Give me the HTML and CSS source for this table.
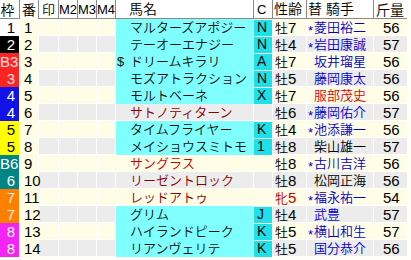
FILE: index.html
```html
<!DOCTYPE html>
<html lang="ja">
<head>
<meta charset="utf-8">
<link rel="stylesheet" href="styles.css">
</head>
<body>
<div class="table">
  <div class="row head">
    <div class="c waku">枠</div>
    <div class="c ban">番</div>
    <div class="c m">印</div>
    <div class="c m">M2</div>
    <div class="c m">M3</div>
    <div class="c m">M4</div>
    <div class="c name">馬名</div>
    <div class="c cc">C</div>
    <div class="c sex">性齢</div>
    <div class="c jk">替 騎手</div>
    <div class="c kin">斤量</div>
  </div>

  <div class="row odd">
    <div class="c waku w1">1</div><div class="c ban">1</div>
    <div class="c m"></div><div class="c m"></div><div class="c m"></div><div class="c m"></div>
    <div class="c name cy"><span class="mk"></span>マルターズアポジー</div>
    <div class="c cc"><span class="cbox">N</span></div>
    <div class="c sex">牡<span class="num">7</span></div>
    <div class="c jk blue"><span class="ast">*</span>菱田裕二</div>
    <div class="c kin">56</div>
  </div>
  <div class="row even">
    <div class="c waku w2">2</div><div class="c ban">2</div>
    <div class="c m"></div><div class="c m"></div><div class="c m"></div><div class="c m"></div>
    <div class="c name cy"><span class="mk"></span>テーオーエナジー</div>
    <div class="c cc"><span class="cbox">N</span></div>
    <div class="c sex">牡<span class="num">4</span></div>
    <div class="c jk blue"><span class="ast">*</span>岩田康誠</div>
    <div class="c kin">57</div>
  </div>
  <div class="row odd">
    <div class="c waku w3">B3</div><div class="c ban">3</div>
    <div class="c m"></div><div class="c m"></div><div class="c m"></div><div class="c m"></div>
    <div class="c name cy"><span class="mk">$</span>ドリームキラリ</div>
    <div class="c cc"><span class="cbox">A</span></div>
    <div class="c sex">牡<span class="num">7</span></div>
    <div class="c jk blue"><span class="ast"></span>坂井瑠星</div>
    <div class="c kin">56</div>
  </div>
  <div class="row even">
    <div class="c waku w3">3</div><div class="c ban">4</div>
    <div class="c m"></div><div class="c m"></div><div class="c m"></div><div class="c m"></div>
    <div class="c name cy"><span class="mk"></span>モズアトラクション</div>
    <div class="c cc"><span class="cbox">N</span></div>
    <div class="c sex">牡<span class="num">5</span></div>
    <div class="c jk blue"><span class="ast"></span>藤岡康太</div>
    <div class="c kin">56</div>
  </div>
  <div class="row odd">
    <div class="c waku w4">4</div><div class="c ban">5</div>
    <div class="c m"></div><div class="c m"></div><div class="c m"></div><div class="c m"></div>
    <div class="c name cy"><span class="mk"></span>モルトベーネ</div>
    <div class="c cc"><span class="cbox">X</span></div>
    <div class="c sex">牡<span class="num">7</span></div>
    <div class="c jk red"><span class="ast"></span>服部茂史</div>
    <div class="c kin">56</div>
  </div>
  <div class="row even">
    <div class="c waku w4">4</div><div class="c ban">6</div>
    <div class="c m"></div><div class="c m"></div><div class="c m"></div><div class="c m"></div>
    <div class="c name dred"><span class="mk"></span>サトノティターン</div>
    <div class="c cc"></div>
    <div class="c sex">牡<span class="num">6</span></div>
    <div class="c jk blue"><span class="ast">*</span>藤岡佑介</div>
    <div class="c kin">57</div>
  </div>
  <div class="row odd">
    <div class="c waku w5">5</div><div class="c ban">7</div>
    <div class="c m"></div><div class="c m"></div><div class="c m"></div><div class="c m"></div>
    <div class="c name cy"><span class="mk"></span>タイムフライヤー</div>
    <div class="c cc"><span class="cbox">K</span></div>
    <div class="c sex">牡<span class="num">4</span></div>
    <div class="c jk blue"><span class="ast">*</span>池添謙一</div>
    <div class="c kin">56</div>
  </div>
  <div class="row even">
    <div class="c waku w5">5</div><div class="c ban">8</div>
    <div class="c m"></div><div class="c m"></div><div class="c m"></div><div class="c m"></div>
    <div class="c name cy"><span class="mk"></span>メイショウスミトモ</div>
    <div class="c cc"><span class="cbox">1</span></div>
    <div class="c sex">牡<span class="num">8</span></div>
    <div class="c jk"><span class="ast"></span>柴山雄一</div>
    <div class="c kin">57</div>
  </div>
  <div class="row odd">
    <div class="c waku w6">B6</div><div class="c ban">9</div>
    <div class="c m"></div><div class="c m"></div><div class="c m"></div><div class="c m"></div>
    <div class="c name red"><span class="mk"></span>サングラス</div>
    <div class="c cc"></div>
    <div class="c sex">牡<span class="num">8</span></div>
    <div class="c jk blue"><span class="ast">*</span>古川吉洋</div>
    <div class="c kin">56</div>
  </div>
  <div class="row even">
    <div class="c waku w6">6</div><div class="c ban">10</div>
    <div class="c m"></div><div class="c m"></div><div class="c m"></div><div class="c m"></div>
    <div class="c name dred"><span class="mk"></span>リーゼントロック</div>
    <div class="c cc"></div>
    <div class="c sex">牡<span class="num">8</span></div>
    <div class="c jk"><span class="ast"></span>松岡正海</div>
    <div class="c kin">56</div>
  </div>
  <div class="row odd">
    <div class="c waku w7">7</div><div class="c ban">11</div>
    <div class="c m"></div><div class="c m"></div><div class="c m"></div><div class="c m"></div>
    <div class="c name dred"><span class="mk"></span>レッドアトゥ</div>
    <div class="c cc"></div>
    <div class="c sex fem">牝<span class="num">5</span></div>
    <div class="c jk blue"><span class="ast">*</span>福永祐一</div>
    <div class="c kin">54</div>
  </div>
  <div class="row even">
    <div class="c waku w7">7</div><div class="c ban">12</div>
    <div class="c m"></div><div class="c m"></div><div class="c m"></div><div class="c m"></div>
    <div class="c name cy"><span class="mk"></span>グリム</div>
    <div class="c cc"><span class="cbox">J</span></div>
    <div class="c sex">牡<span class="num">4</span></div>
    <div class="c jk blue"><span class="ast"></span>武豊</div>
    <div class="c kin">57</div>
  </div>
  <div class="row odd">
    <div class="c waku w8">8</div><div class="c ban">13</div>
    <div class="c m"></div><div class="c m"></div><div class="c m"></div><div class="c m"></div>
    <div class="c name cy"><span class="mk"></span>ハイランドピーク</div>
    <div class="c cc"><span class="cbox">K</span></div>
    <div class="c sex">牡<span class="num">5</span></div>
    <div class="c jk blue"><span class="ast">*</span>横山和生</div>
    <div class="c kin">57</div>
  </div>
  <div class="row even">
    <div class="c waku w8">8</div><div class="c ban">14</div>
    <div class="c m"></div><div class="c m"></div><div class="c m"></div><div class="c m"></div>
    <div class="c name cy"><span class="mk"></span>リアンヴェリテ</div>
    <div class="c cc"><span class="cbox">K</span></div>
    <div class="c sex">牡<span class="num">5</span></div>
    <div class="c jk blue"><span class="ast"></span>国分恭介</div>
    <div class="c kin">56</div>
  </div>
</div>
</body>
</html>
```

FILE: styles.css
```css
html, body {
  margin: 0;
  padding: 0;
  background: #fffff6;
}
body {
  font-family: "Liberation Sans", "Noto Sans CJK JP", sans-serif;
  font-size: 13px;
  font-weight: 350;
  color: #000;
}
.table {
  width: 407px;
  display: flex;
  flex-direction: column;
}
.row {
  display: grid;
  grid-template-columns: 20px 19px 20px 19px 19px 19px 138px 18px 35px 67px 33px;
  height: 17px;
  border-bottom: 1px solid #fff;
  box-sizing: border-box;
}
.row.head {
  height: 19px;
  background: #fff;
  border-bottom: 1px solid #8a8a8a;
}
.c {
  box-sizing: border-box;
  border-right: 1px solid #fff;
  line-height: 17px;
  white-space: nowrap;
}
.head .c {
  border-right: 1px solid #8a8a8a;
  line-height: 19px;
  text-align: center;
  font-size: 14px;
}
.head .c.kin { border-right: none; text-align: left; padding-left: 2px; }
.head .c.name { text-align: left; padding-left: 13px; }
.head .c.cc { border-right: none; text-align: left; padding-left: 3px; font-size: 13px; }
.head .c.sex { text-align: left; padding-left: 1px; border-left: 1px solid #8a8a8a; }
.head .c.jk { text-align: left; padding-left: 1px; }
.head .c.m { font-family: "Liberation Sans Narrow", "Liberation Sans", "Noto Sans CJK JP", sans-serif; font-size: 13px; }

.odd { background: #fffde6; }
.even { background: #ececec; }

.ban, .kin, .waku, .num {
  font-family: "Liberation Sans Narrow", "Liberation Sans", sans-serif;
  font-size: 15px;
}
.head .ban, .head .kin, .head .waku { font-family: "Noto Sans CJK JP", sans-serif; font-size: 14px; }

.ban { background: #fffde6; padding-left: 4px; }
.head .ban { background: #fff; padding-left: 0; }

.waku { text-align: right; padding-right: 4px; }
.w1 { background: #fff; color: #000; }
.w2 { background: #000; color: #fff; }
.w3 { background: #ff2424; color: #ffe0e0; }
.w4 { background: #1212e6; color: #fff; }
.w5 { background: #ffff00; color: #000; }
.w6 { background: #008585; color: #fff; }
.w7 { background: #ff8000; color: #fff0e0; }
.w8 { background: #f424f4; color: #fff; }

.name { padding-left: 1px; }
.name.cy { background: #80ffff; color: #111; }
.name.dred { color: #8b0000; }
.name.red { color: #cc0000; }
.mk { display: inline-block; width: 13px; }

.cc { border-right: none; display: flex; }
.cbox {
  flex: 1;
  background: #1ee0e8;
  color: #000;
  padding-left: 3px;
  line-height: 15px;
  margin-top: 1px;
  font-size: 14px;
}

.sex { padding-left: 2px; border-left: 1px solid #fff; }
.sex.fem { color: #c00000; }

.jk.blue { color: #0000c8; }
.jk.red { color: #dd0000; }
.ast { display: inline-block; width: 7px; text-align: center; vertical-align: -3px; }

.kin { border-right: none; padding-left: 9px; }
```
